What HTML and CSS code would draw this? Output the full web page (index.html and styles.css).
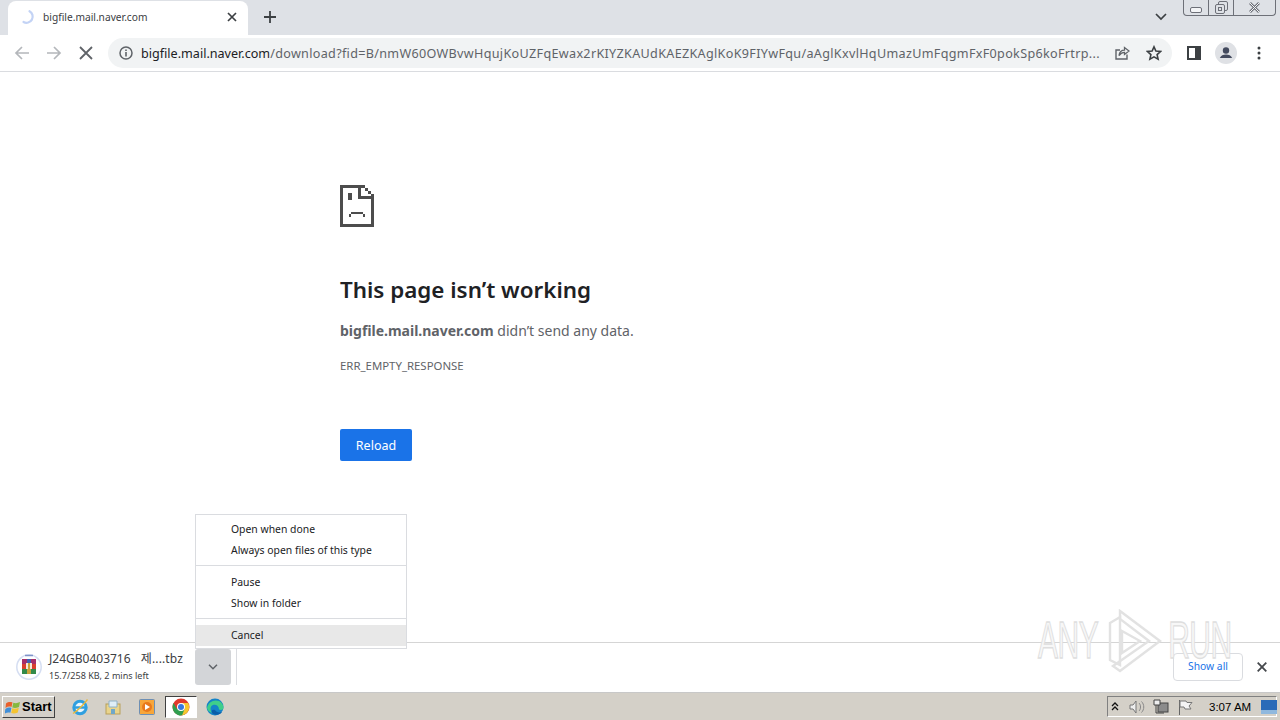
FILE: index.html
```html
<!DOCTYPE html>
<html lang="en">
<head>
<meta charset="utf-8">
<title>bigfile.mail.naver.com</title>
<link rel="stylesheet" href="styles.css">
</head>
<body>
<div class="window">
  <header class="tabstrip">
    <div class="tab">
      <svg class="spinner" width="16" height="16" viewBox="0 0 16 16"><path d="M8.500 2.200A6 6 0 0 1 2.500 13" fill="none" stroke="#c3d3f5" stroke-width="2.200" stroke-linecap="round"/></svg>
      <span class="tab-title">bigfile.mail.naver.com</span>
      <svg class="tab-close" width="10" height="10" viewBox="0 0 10 10"><path d="M1 1l8 8M9 1l-8 8" stroke="#3c4043" stroke-width="1.700"/></svg>
    </div>
    <svg class="newtab" width="12" height="12" viewBox="0 0 12 12"><path d="M6 0v12M0 6h12" stroke="#3c4043" stroke-width="1.800"/></svg>
    <div class="strip-right">
      <svg class="tabsearch" width="12" height="8" viewBox="0 0 12 8"><path d="M1 1l5 5 5-5" fill="none" stroke="#3c4043" stroke-width="1.700"/></svg>
      <div class="winbtns">
        <div class="winbtn min"><svg width="12" height="6" viewBox="0 0 12 6"><rect x=".5" y=".5" width="11" height="5" rx="1.500" fill="#f3f4f6" stroke="#6d7078"/></svg></div>
        <div class="winbtn max"><svg width="13" height="13" viewBox="0 0 13 13"><rect x="3.500" y=".5" width="9" height="9" rx="1.500" fill="none" stroke="#6d7078"/><rect x=".5" y="3.500" width="9" height="9" rx="1.500" fill="#dee1e6" stroke="#6d7078"/><rect x="3.500" y="6.500" width="3" height="3" fill="none" stroke="#6d7078"/></svg></div>
        <div class="winbtn cls"><svg width="13" height="11" viewBox="0 0 13 11"><path d="M2 1l9 9M11 1l-9 9" stroke="#6d7078" stroke-width="2.600"/><path d="M2 1l9 9M11 1l-9 9" stroke="#f3f4f6" stroke-width="1"/></svg></div>
      </div>
    </div>
  </header>

  <nav class="toolbar">
    <svg class="navicon first" width="16" height="16" viewBox="0 0 16 16"><path d="M15 8H2M8 2L2 8l6 6" fill="none" stroke="#b4b7bb" stroke-width="1.700"/></svg>
    <svg class="navicon" width="16" height="16" viewBox="0 0 16 16"><path d="M1 8h13M8 2l6 6-6 6" fill="none" stroke="#b4b7bb" stroke-width="1.700"/></svg>
    <svg class="navicon stop" width="14" height="14" viewBox="0 0 14 14"><path d="M1 1l12 12M13 1L1 13" stroke="#5f6368" stroke-width="1.800"/></svg>
    <div class="omnibox">
      <svg class="info" width="14" height="14" viewBox="0 0 14 14"><circle cx="7" cy="7" r="6" fill="none" stroke="#5f6368" stroke-width="1.500"/><path d="M7 6v4.400M7 3.400v1.500" stroke="#5f6368" stroke-width="1.600"/></svg>
      <span class="url"><span class="host">bigfile.mail.naver.com</span>/download?fid=B/nmW60OWBvwHqujKoUZFqEwax2rKIYZKAUdKAEZKAglKoK9FIYwFqu/aAglKxvlHqUmazUmFqgmFxF0pokSp6koFrtrp...</span>
      <svg class="share" width="16" height="16" viewBox="0 0 16 16"><path d="M13 9.500V14H2V5h4" fill="none" stroke="#5f6368" stroke-width="1.400"/><path d="M5 10.500C5.500 7 8 5.200 10.500 5.200V2.500L15 6l-4.500 3.500V7.300C8.500 7.300 6.500 8.500 5 10.500z" fill="none" stroke="#5f6368" stroke-width="1.300"/></svg>
      <svg class="star" width="16" height="16" viewBox="0 0 16 16"><path d="M8 1.800l1.900 4.200 4.600.5-3.400 3.100 1 4.500L8 11.800l-4.100 2.300 1-4.500L1.500 6.500 6.100 6z" fill="none" stroke="#3c4043" stroke-width="1.600"/></svg>
    </div>
    <svg class="sidepanel" width="14" height="14" viewBox="0 0 14 14"><rect x="1" y="1" width="12" height="12" fill="#fff" stroke="#3c4043" stroke-width="2"/><rect x="8" y="1" width="5" height="12" fill="#3c4043"/></svg>
    <div class="avatar"><svg width="22" height="22" viewBox="0 0 22 22"><circle cx="11" cy="11" r="11" fill="#dfe1e5"/><circle cx="11" cy="8.500" r="3.200" fill="#434a5e"/><path d="M4.800 16c1-2.700 3.500-3.600 6.200-3.600s5.200.9 6.200 3.600z" fill="#434a5e"/></svg></div>
    <svg class="kebab" width="4" height="14" viewBox="0 0 4 14"><circle cx="2" cy="2" r="1.500" fill="#3c4043"/><circle cx="2" cy="7" r="1.500" fill="#3c4043"/><circle cx="2" cy="12" r="1.500" fill="#3c4043"/></svg>
  </nav>

  <main class="page">
    <div class="error">
      <svg class="sad" width="34" height="42" viewBox="0 0 34 42" shape-rendering="crispEdges"><path fill="#4d4d4d" d="M0 0h25v3h3v3h3v3h3v33H0zM3 3v36h28V14H18V3zM21 3v8h10V9h-3V6h-3V3z" fill-rule="evenodd"/><path fill="#4d4d4d" d="M8 8h4v7H8zM11 27h12v2h2v3h-2v-3H11v3H9v-3h2z"/></svg>
      <h1 class="title">This page isn’t working</h1>
      <p class="desc"><strong>bigfile.mail.naver.com</strong> didn’t send any data.</p>
      <p class="code">ERR_EMPTY_RESPONSE</p>
      <button class="reload">Reload</button>
    </div>
    <ul class="menu">
      <li>Open when done</li>
      <li>Always open files of this type</li>
      <li class="sep"></li>
      <li>Pause</li>
      <li>Show in folder</li>
      <li class="sep"></li>
      <li class="active">Cancel</li>
    </ul>
    <div class="watermark">
      <span class="wm-word">ANY</span>
      <svg class="wm-logo" width="58" height="64" viewBox="0 0 58 64"><g fill="none" stroke="#e2e2e2" stroke-width="2.400"><path d="M6 14l10-6v48l-10-5z"/><path d="M16 2l40 30-40 30-7-5 36-25L16 10z"/><path d="M18 22l18 10-18 12z"/></g></svg>
      <span class="wm-word">RUN</span>
    </div>
  </main>

  <section class="downloads">
    <div class="dl-item">
      <div class="dl-icon">
        <svg width="26" height="26" viewBox="0 0 26 26"><circle cx="13" cy="13" r="12.200" fill="#fff" stroke="#d5def2" stroke-width="1.500"/><path d="M9 1.500h8" stroke="#7f93c8" stroke-width="1.500"/><rect x="6" y="5" width="5" height="5" fill="#a52f6a"/><rect x="11" y="5" width="4" height="5" fill="#3f5fb4"/><rect x="15" y="5" width="5" height="5" fill="#a52f6a"/><rect x="6" y="10" width="14" height="5" fill="#d83f2e"/><rect x="6" y="15" width="5" height="5" fill="#338a4a"/><rect x="11" y="15" width="4" height="5" fill="#c9a23c"/><rect x="15" y="15" width="5" height="5" fill="#338a4a"/><rect x="10" y="9" width="6" height="6" fill="#f4e9d8"/><rect x="12" y="9" width="2" height="6" fill="#c9a23c"/></svg>
      </div>
      <div class="dl-text">
        <div class="dl-name">J24GB0403716 <span class="dl-kr">제....tbz</span></div>
        <div class="dl-status">15.7/258 KB, 2 mins left</div>
      </div>
      <div class="dl-caret"><svg width="10" height="6" viewBox="0 0 10 6"><path d="M1 .8l4 4 4-4" fill="none" stroke="#5f6368" stroke-width="1.500"/></svg></div>
    </div>
    <div class="dl-divider"></div>
    <button class="showall">Show all</button>
    <svg class="dl-close" width="10" height="10" viewBox="0 0 10 10"><path d="M.7.700l8.600 8.600M9.300.700L.7 9.300" stroke="#45484c" stroke-width="1.800"/></svg>
  </section>

  <footer class="taskbar">
    <div class="start">
      <svg width="16" height="16" viewBox="0 0 16 16"><path d="M1 4.500C3 3 5 2.800 7.500 3.500L6.500 8C4.500 7.300 2.500 7.500.5 9z" fill="#e8602c"/><path d="M8.300 3.700c2 .7 4.200.6 6.700-.7l-1 5c-2.300 1.200-4.600 1.300-6.700.6z" fill="#86b83f"/><path d="M.4 10c2-1.500 4-1.700 6-1l-1 4.800c-2-.7-4-.5-6 1z" fill="#3f8fd8"/><path d="M7.200 9.300c2.100.7 4.300.6 6.600-.6l-1 4.800c-2.300 1.200-4.500 1.300-6.600.6z" fill="#f4c430"/></svg>
      <span>Start</span>
    </div>
    <div class="tasks">
      <div class="task first"><svg width="18" height="18" viewBox="0 0 18 18"><circle cx="9" cy="9.500" r="6.200" fill="#eaf6fd" stroke="#2f9fe0" stroke-width="3"/><path d="M3 9.500h12" stroke="#2f9fe0" stroke-width="2.500"/><path d="M2 15.500C6 13 13 6 16.500 1.500" fill="none" stroke="#e8b93c" stroke-width="1.300"/></svg></div>
      <div class="task"><svg width="18" height="18" viewBox="0 0 18 18"><rect x="2" y="6" width="14" height="10" fill="#e9d48c" stroke="#b89f5a"/><path d="M5 3h8v6H5z" fill="#dfeef7" stroke="#8fb2c8"/><rect x="7" y="11" width="4" height="5" fill="#6fa7c9"/></svg></div>
      <div class="task"><svg width="18" height="18" viewBox="0 0 18 18"><rect x="1.500" y="1.500" width="15" height="15" rx="1" fill="#f7a63a" stroke="#6d8fb5"/><circle cx="9" cy="9" r="5" fill="#e8791c"/><path d="M7 6l5 3-5 3z" fill="#fff"/></svg></div>
      <div class="task current"><svg width="18" height="18" viewBox="0 0 18 18"><circle cx="9" cy="9" r="8.500" fill="#e0392c"/><path d="M9 9L16 13A8.500 8.500 0 0 1 6 17z" fill="#2f9e4f"/><path d="M9 5h7.200A8.500 8.500 0 0 1 10 17.400L13 10z" fill="#f7c52e"/><path d="M5 11L1.500 5A8.500 8.500 0 0 0 8 17.400L11 12z" fill="#2f9e4f"/><circle cx="9" cy="9" r="4" fill="#fff"/><circle cx="9" cy="9" r="3" fill="#3778e0"/></svg></div>
      <div class="task"><svg width="18" height="18" viewBox="0 0 18 18"><circle cx="9" cy="9" r="8.500" fill="#1483c8"/><path d="M1 10C2 4 8 1 13 3c3 1.500 4.500 4 4.500 7 0 2-3 2.500-4.500 1.500C13 8 10 6 7 7c-3 1-3 5-1 8C3 14 1.500 12 1 10z" fill="#3fce8a"/><path d="M6 15c3 3 8 2 10-1-3 1-6 0-7-2-2-1-4 0-3 3z" fill="#0b5ea8"/></svg></div>
    </div>
    <div class="tray">
      <svg class="tray-up" width="8" height="9" viewBox="0 0 8 9"><path d="M1 4l3-3 3 3M1 8l3-3 3 3" fill="none" stroke="#111" stroke-width="1.300"/></svg>
      <svg width="16" height="16" viewBox="0 0 16 16"><path d="M1 6h3l3-4v12l-3-4H1z" fill="#eeeeee" stroke="#777"/><path d="M10 4c2 2 2 6 0 8M12.500 2.500c3 3 3 8 0 11" fill="none" stroke="#888"/></svg>
      <svg width="16" height="16" viewBox="0 0 16 16"><rect x="5" y="4" width="10" height="9" fill="#8b8b8b" stroke="#444"/><path d="M1 1h6v5H1z" fill="#eee" stroke="#444"/><path d="M3 6v8h8" fill="none" stroke="#444"/></svg>
      <svg width="16" height="16" viewBox="0 0 16 16"><path d="M2.500 1v15" stroke="#666"/><path d="M3 2h6l1 1.500h5L12 7l2 3H8L7 8H3z" fill="#f4f4f4" stroke="#777"/></svg>
      <span class="clock">3:07 AM</span>
      <svg class="showdesk" width="16" height="14" viewBox="0 0 16 14"><rect width="16" height="14" fill="#2a6bb8"/><rect y="10" width="16" height="4" fill="#8fb8de"/></svg>
    </div>
  </footer>
</div>
</body>
</html>
```
FILE: styles.css
```css
* { box-sizing: border-box; }
html, body { margin: 0; padding: 0; }
body { width: 1280px; height: 720px; overflow: hidden; background: #fff; font-family: "Noto Sans", "Noto Sans CJK KR", sans-serif; color: #202124; }
.window { width: 1280px; height: 720px; display: flex; flex-direction: column; }
svg { display: block; flex: none; }

.tabstrip { height: 35px; flex: none; background: #dee1e6; display: flex; align-items: flex-end; padding-left: 8px; }
.tab { width: 240px; height: 34px; background: #fff; border-radius: 8px 8px 0 0; display: flex; align-items: center; padding: 0 11px 2px 13px; }
.spinner { margin-right: 6px; }
.tab-title { flex: 1; font-size: 10.200px; color: #3c4043; white-space: nowrap; }
.newtab { margin: 0 0 12px 16px; }
.strip-right { margin-left: auto; height: 35px; display: flex; align-items: flex-start; }
.tabsearch { margin: 13px 16px 0 0; }
.winbtns { display: flex; width: 93px; height: 16px; margin-right: 4px; border: 1px solid #6d7078; border-top: 0; border-radius: 0 0 4px 4px; }
.winbtn { display: flex; align-items: center; justify-content: center; height: 15px; }
.min { width: 25px; border-right: 1px solid #6d7078; padding-top: 5px; }
.max { width: 25px; border-right: 1px solid #6d7078; }
.cls { flex: 1; }

.toolbar { height: 37px; flex: none; background: #fff; border-bottom: 1px solid #dadce0; display: flex; align-items: center; }
.navicon { margin-left: 16px; }
.navicon.first { margin-left: 14px; }
.navicon.stop { margin-left: 17px; margin-right: 15px; }
.omnibox { width: 1064px; height: 30px; background: #f1f3f4; border-radius: 15px; display: flex; align-items: center; padding: 0 10px 0 11px; }
.info { margin-right: 8px; }
.url { flex: 1; font-size: 12.600px; letter-spacing: .32px; color: #5f6368; white-space: nowrap; overflow: hidden; }
.host { color: #202124; letter-spacing: 0; }
.share { margin: 0 16px 0 10px; }
.sidepanel { margin-left: 15px; }
.avatar { margin-left: 14px; }
.kebab { margin-left: 20px; }

.page { flex: 1; position: relative; background: #fff; padding: 113px 0 0 340px; }
.error { width: 600px; }
.sad { margin-bottom: 48px; }
.title { margin: 0; font-size: 22.400px; line-height: 30px; font-weight: 600; color: #202124; }
.desc { margin: 16px 0 0; font-size: 14px; line-height: 20px; color: #5f6368; }
.desc strong { font-weight: 700; }
.code { margin: 17px 0 0; font-size: 11.400px; line-height: 16px; color: #5f6368; }
.reload { display: block; margin-top: 55px; width: 72px; height: 32px; border: 0; border-radius: 2px; background: #1a73e8; color: #fff; font: 12.500px "Noto Sans", sans-serif; }

.menu { position: absolute; left: 195px; top: 442px; width: 212px; height: 135px; margin: 0; padding: 4px 0; list-style: none; background: #fff; border: 1px solid #dadce0; font-size: 10.400px; color: #202124; z-index: 3; }
.menu li { height: 21px; line-height: 20px; padding-left: 35px; white-space: nowrap; }
.menu .sep { height: 11px; position: relative; }
.menu .sep::after { content: ""; position: absolute; left: 0; right: 0; top: 4px; height: 1px; background: #dadce0; }
.menu .active { background: #e8e8e8; }

.watermark { position: absolute; left: 1038px; top: 537px; height: 64px; display: flex; align-items: center; gap: 6px; z-index: 2; }
.wm-word { font: 30px/30px "Liberation Sans", sans-serif; color: #f7f7f7; -webkit-text-stroke: .8px #dedede; transform: scaleY(1.72); letter-spacing: -.5px; }

.downloads { height: 51px; flex: none; position: relative; z-index: 1; background: #fff; border-top: 1px solid #d5d5d5; border-bottom: 1px solid #c8c8c8; padding: 0 0 1px 16px; display: flex; align-items: center; }
.dl-item { display: flex; align-items: center; }
.dl-text { margin-left: 7px; width: 146px; }
.dl-name { font-size: 12px; line-height: 16px; color: #3c4043; white-space: nowrap; }
.dl-kr { margin-left: 7px; letter-spacing: .15px; }
.dl-status { font-size: 9.050px; line-height: 14px; color: #3c4043; margin-top: 2px; white-space: nowrap; }
.dl-caret { width: 36px; height: 36px; background: #d3d5d8; border-radius: 3px; display: flex; align-items: center; justify-content: center; }
.dl-divider { width: 1px; height: 36px; background: #dadce0; margin-left: 5px; }
.showall { margin-left: auto; width: 70px; height: 28px; background: #fff; border: 1px solid #dadce0; border-radius: 4px; color: #1a73e8; font: 10.300px "Noto Sans", sans-serif; padding: 0 0 3px; }
.dl-close { margin: 0 13px 0 14px; }

.taskbar { height: 27px; flex: none; background: #d4d0c8; display: flex; align-items: center; }
.start { width: 53px; height: 22px; margin-left: 2px; display: flex; align-items: center; gap: 1px; padding-left: 2px; background: #d4d0c8; border: 1px solid; border-color: #fff #404040 #404040 #fff; font: 700 13px "Liberation Sans", sans-serif; color: #000; }
.tasks { display: flex; align-items: center; margin-left: 8px; gap: 2px; }
.task { width: 32px; height: 22px; display: flex; align-items: center; justify-content: center; }
.task.first { margin-left: 1px; margin-right: -1px; }
.task.current { background: #fff; border: 1px solid; border-color: #404040 #fff #fff #404040; }
.tray { margin-left: auto; width: 170px; height: 21px; margin-right: 3px; display: flex; align-items: center; border: 1px solid; border-color: #808080 #fff #fff #808080; padding-left: 3px; gap: 8px; }
.tray-up { margin-right: 2px; }
.clock { font: 11.500px "Liberation Sans", sans-serif; color: #000; margin-left: 8px; white-space: nowrap; }
.showdesk { margin-left: 2px; }
```
